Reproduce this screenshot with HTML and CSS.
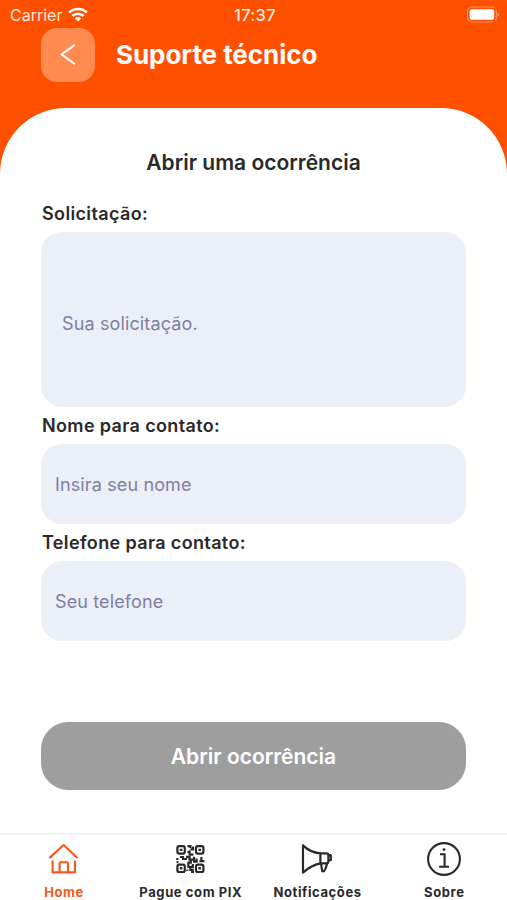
FILE: index.html
```html
<!DOCTYPE html>
<html lang="pt-BR">
<head>
    <meta charset="UTF-8">
    <meta name="viewport" content="width=device-width, initial-scale=1.0">
    <title>Suporte técnico</title>
    <link rel="stylesheet" href="styles.css">
</head>
<body>
    <div class="status-bar">
        <div class="carrier">
            <span>Carrier</span>
            <svg viewBox="0 0 20 15" width="20" height="15">
                <path d="M1.2 5.6 A12.4 12.4 0 0 1 18.8 5.6" fill="none" stroke="#fff" stroke-width="2.6"/>
                <path d="M4.4 9 A7.9 7.9 0 0 1 15.6 9" fill="none" stroke="#fff" stroke-width="2.5"/>
                <path d="M10 14.6 L6.8 11.4 A4.5 4.5 0 0 1 13.2 11.4 Z" fill="#fff"/>
            </svg>
        </div>
        <span class="clock">17:37</span>
        <svg class="battery" viewBox="0 0 34 17" width="34" height="17">
            <rect x="1.4" y="1" width="29" height="15" rx="4.5" fill="none" stroke="#fff" stroke-opacity="0.35" stroke-width="1.2"/>
            <rect x="3.6" y="3.2" width="24.6" height="10.6" rx="2.2" fill="#fff"/>
            <path d="M31.6 6.2 Q33 7 33 8.5 Q33 10 31.6 10.8 Z" fill="#fff" fill-opacity="0.4"/>
        </svg>
    </div>

    <header class="header">
        <button class="back-button" aria-label="Voltar">
            <svg viewBox="0 0 16 22" width="16" height="22">
                <path d="M14 1.4 L1.6 10.4 L14 19.6" fill="none" stroke="#fff" stroke-width="2.1" stroke-linecap="round" stroke-linejoin="round"/>
            </svg>
        </button>
        <h1>Suporte técnico</h1>
    </header>

    <main class="panel">
        <h2>Abrir uma ocorrência</h2>
        <form class="form">
            <label class="label-request" for="request">Solicitação:</label>
            <input class="field field-large" id="request" type="text" placeholder="Sua solicitação.">
            <label for="name">Nome para contato:</label>
            <input class="field" id="name" type="text" placeholder="Insira seu nome">
            <label for="phone">Telefone para contato:</label>
            <input class="field" id="phone" type="tel" placeholder="Seu telefone">
            <button class="submit-button" type="button">Abrir ocorrência</button>
        </form>
    </main>

    <nav class="tab-bar">
        <a class="tab active">
            <svg viewBox="0 0 36 36" width="36" height="36" fill="none" stroke="currentColor" stroke-width="2.1" stroke-linecap="round" stroke-linejoin="round">
                <path d="M5 16.4 L18.6 4 L32 16.4"/>
                <path d="M7.6 20.4 V31.4 H30 V20.4"/>
                <path d="M14.6 31 V22.2 Q14.6 21.2 15.6 21.2 H22 Q23 21.2 23 22.2 V31"/>
            </svg>
            <span>Home</span>
        </a>
        <a class="tab">
            <svg viewBox="0 0 36 36" width="36" height="36" fill="none" stroke="currentColor" stroke-width="2.2">
                <rect x="5.4" y="5.2" width="7.4" height="7.4" rx="1.8"/>
                <rect x="24" y="5.2" width="7.4" height="7.4" rx="1.8"/>
                <rect x="5.4" y="23.6" width="7.4" height="7.4" rx="1.8"/>
                <rect x="24" y="23.6" width="7.4" height="7.4" rx="1.8"/>
                <path d="M7.8 8.9 H10.4 M26.4 8.9 H29 M7.8 27.3 H10.4 M26.4 27.3 H29" stroke-width="2.4"/>
                <path d="M15.4 5.2 H18.4 V7 M18.4 8.4 H21 V5.4 M15.4 11 H17 M17.6 9.6 V13.6 H21.4"/>
                <path d="M4.2 18 H6.4 M4.6 21.2 H6.4 M8 16 H11 V18 H15 M14 15.8 H17.6 V18.6 H22 V15.8 M18.8 18 V21.6 H15.4 M21 20.6 H24.6 V17.6 M27.4 20.2 H29.4 V16 M29.4 20.2 H32.4"/>
                <path d="M16.4 22 V26 H20.8 V23 M15.4 28.4 V30 M18.4 26 V28.8 H21.8 M19 31 H22"/>
            </svg>
            <span>Pague com PIX</span>
        </a>
        <a class="tab">
            <svg viewBox="0 0 36 36" width="36" height="36" fill="none" stroke="currentColor" stroke-width="2.2" stroke-linejoin="round">
                <path d="M4 4.4 V31.6 Q12 24.4 21.4 22.4 V12.4 Q11 11.4 4 4.4 Z"/>
                <path d="M21.4 12.4 H27.4 Q29.4 12.4 29.4 14.4 V20 Q29.4 22.4 27.4 22.4 H21.4"/>
                <path d="M22 22.4 L23.2 30.2 Q25.4 30.8 26.4 28 L28.4 22"/>
                <path d="M29.4 14.2 H31.8 V19.2 H29.4"/>
            </svg>
            <span>Notificações</span>
        </a>
        <a class="tab">
            <svg viewBox="0 0 36 36" width="36" height="36" fill="none" stroke="currentColor" stroke-width="2.1">
                <circle cx="18" cy="18" r="15.9"/>
                <circle cx="18" cy="8.6" r="1.4" fill="currentColor" stroke="none"/>
                <path d="M14 13.2 H18.6 V25.6 M13.2 25.8 H23"/>
            </svg>
            <span>Sobre</span>
        </a>
    </nav>
</body>
</html>
```

FILE: styles.css
```css
* {
    box-sizing: border-box;
}

body {
    margin: 0;
    height: 900px;
    display: flex;
    flex-direction: column;
    overflow: hidden;
    font-family: Inter, "Liberation Sans", sans-serif;
    color: #29292b;
    background: linear-gradient(#ff5000 200px, #fff 200px);
}

h1, h2 {
    margin: 0;
}

/* Status bar */
.status-bar {
    height: 28px;
    padding: 1px 7px 0 10px;
    display: grid;
    grid-template-columns: 1fr auto 1fr;
    align-items: center;
    color: #ffe9de;
    font-size: 16px;
}

.carrier {
    display: flex;
    align-items: center;
    gap: 6px;
}

.clock {
    font-size: 16.5px;
    font-weight: 500;
    letter-spacing: 0.3px;
}

.battery {
    justify-self: end;
}

/* Header */
.header {
    height: 80.4px;
    padding-left: 41px;
    display: flex;
    align-items: flex-start;
    gap: 21px;
}

.back-button {
    width: 54px;
    height: 54px;
    padding: 0;
    display: flex;
    justify-content: center;
    align-items: center;
    border: none;
    border-radius: 16px;
    background-color: #ff8b50;
}

.header h1 {
    line-height: 54px;
    font-size: 26px;
    font-weight: 700;
    letter-spacing: -0.05px;
    color: #fff;
}

/* White panel */
.panel {
    flex: 1;
    padding: 38px 41px 0;
    border-radius: 66px 66px 0 0;
    background-color: #fff;
}

.panel h2 {
    line-height: 33px;
    font-size: 21px;
    font-weight: 600;
    text-align: center;
}

.form {
    padding-top: 23px;
    display: flex;
    flex-direction: column;
}

.form label {
    height: 37px;
    padding-left: 1px;
    line-height: 37px;
    font-size: 18px;
    font-weight: 600;
    letter-spacing: 0.36px;
}

.form .label-request {
    height: 30px;
    line-height: 24px;
}

.field {
    width: 425px;
    height: 80px;
    padding: 0 14px;
    border: none;
    border-radius: 21px;
    background-color: #ebeff7;
    font-family: inherit;
    font-size: 18px;
    letter-spacing: 0.13px;
    color: #29292b;
}

.field::placeholder {
    color: #7f7f9f;
    opacity: 1;
}

.field-large {
    height: 175px;
    padding: 7px 21px 0;
}

.submit-button {
    width: 425px;
    height: 67.5px;
    margin-top: 81px;
    padding: 0;
    border: none;
    border-radius: 27px;
    background-color: #9e9e9e;
    font-family: inherit;
    font-size: 21px;
    font-weight: 600;
    color: #fff;
}

/* Tab bar */
.tab-bar {
    height: 67px;
    display: grid;
    grid-template-columns: repeat(4, 1fr);
    border-top: 2px solid #f3f3f4;
    background-color: #fff;
}

.tab {
    padding-top: 6px;
    display: flex;
    flex-direction: column;
    align-items: center;
    gap: 7px;
    font-size: 13px;
    line-height: 16px;
    font-weight: 700;
    letter-spacing: 0.6px;
    white-space: nowrap;
}

.tab span {
    padding-left: 1.4px;
}

.tab.active {
    color: #f55a1b;
}
```
